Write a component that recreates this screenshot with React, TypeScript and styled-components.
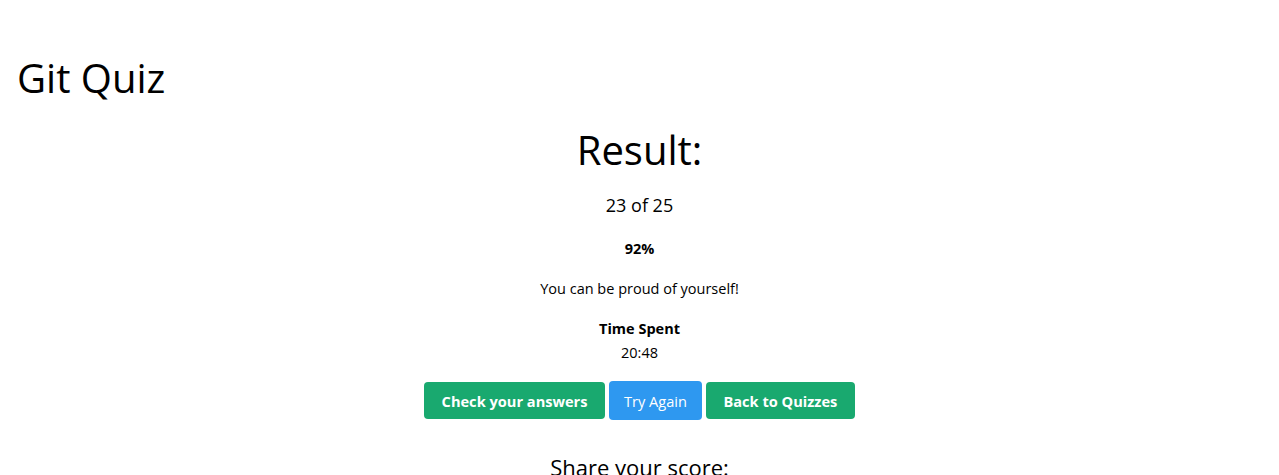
import React from "react";
import styled, { createGlobalStyle } from "styled-components";

const GlobalStyle = createGlobalStyle`
  body {
    margin: 0;
    font-family: "Open Sans", "Noto Sans", sans-serif;
    color: #000;
    background: #fff;
  }
`;

const Header = styled.header`
  padding: 54px 0 0 17px;
`;

const Title = styled.h1`
  margin: 0;
  font-size: 40px;
  font-weight: 400;
  line-height: 48px;
`;

const ResultSection = styled.main`
  display: flex;
  flex-direction: column;
  align-items: center;
  text-align: center;
  margin-top: 20px;
`;

const ResultHeading = styled.h2`
  margin: 0 0 13px;
  font-size: 40px;
  font-weight: 400;
  line-height: 56px;
`;

const Line = styled.p<{ $size?: number; $bold?: boolean; $gap?: number }>`
  margin: 0 0 ${(p) => (p.$gap ?? 16)}px;
  font-size: ${(p) => p.$size ?? 14.5}px;
  font-weight: ${(p) => (p.$bold ? 700 : 400)};
  line-height: ${(p) => Math.round((p.$size ?? 15) * 1.6)}px;
`;

const ButtonRow = styled.div`
  display: flex;
  gap: 4px;
  align-items: center;
`;

const ActionButton = styled.button<{ $variant: "green" | "blue" }>`
  border: none;
  border-radius: 4px;
  font-family: inherit;
  font-size: 14.6px;
  color: #fff;
  cursor: pointer;
  background: ${(p) => (p.$variant === "green" ? "#19a96f" : "#2e98f0")};
  font-weight: ${(p) => (p.$variant === "green" ? 700 : 400)};
  height: ${(p) => (p.$variant === "green" ? 37 : 39)}px;
  padding: 0 ${(p) => (p.$variant === "green" ? 17.5 : 15)}px;
`;

const ShareHeading = styled.h3`
  margin: 32px 0 0;
  font-size: 22px;
  font-weight: 400;
  line-height: 30px;
`;

export default function App() {
  return (
    <>
      <GlobalStyle />
      <Header>
        <Title>Git Quiz</Title>
      </Header>
      <ResultSection>
        <ResultHeading>Result:</ResultHeading>
        <Line $size={18} $gap={17}>23 of 25</Line>
        <Line $bold>92%</Line>
        <Line>You can be proud of yourself!</Line>
        <Line $bold $gap={0}>Time Spent</Line>
        <Line>20:48</Line>
        <ButtonRow>
          <ActionButton $variant="green">Check your answers</ActionButton>
          <ActionButton $variant="blue">Try Again</ActionButton>
          <ActionButton $variant="green">Back to Quizzes</ActionButton>
        </ButtonRow>
        <ShareHeading>Share your score:</ShareHeading>
      </ResultSection>
    </>
  );
}
